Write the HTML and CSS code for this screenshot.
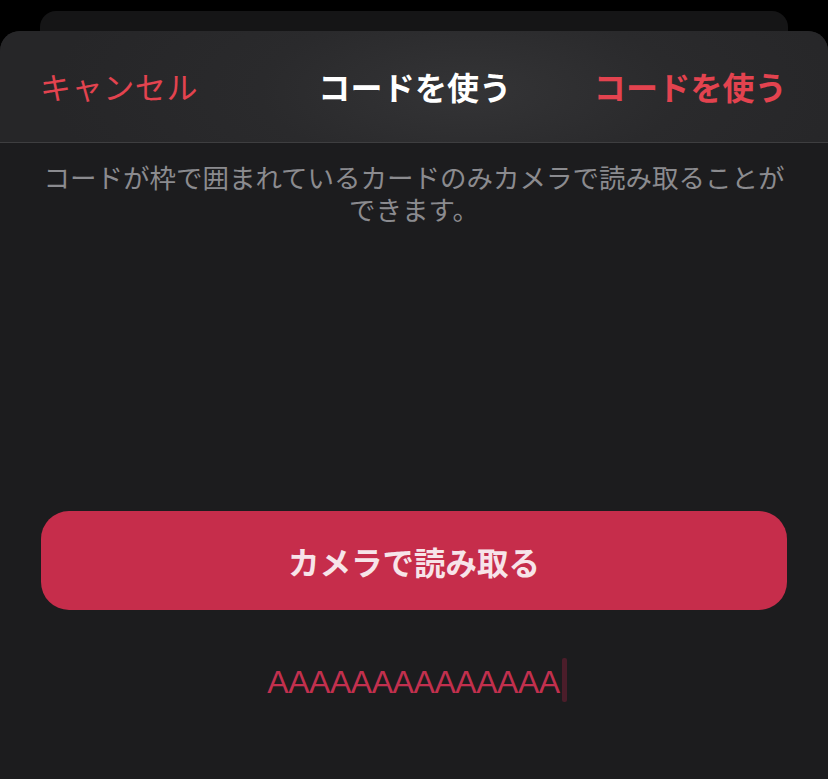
FILE: index.html
```html
<!DOCTYPE html>
<html lang="ja">
<head>
<meta charset="utf-8">
<title>コードを使う</title>
<link rel="stylesheet" href="styles.css">
</head>
<body>
<div class="back-card"></div>
<div class="sheet">
  <header class="sheet-header">
    <span class="hdr-btn cancel">キャンセル</span>
    <span class="hdr-title">コードを使う</span>
    <span class="hdr-btn confirm">コードを使う</span>
  </header>
  <p class="desc">コードが枠で囲まれているカードのみカメラで読み取ることができます。</p>
  <div class="cam-btn">カメラで読み取る</div>
  <div class="code-field">
    <span class="code-text">AAAAAAAAAAAAAA</span><span class="caret"></span>
  </div>
</div>
</body>
</html>
```

FILE: styles.css
```css
html, body {
  margin: 0;
  padding: 0;
  background: #000;
  height: 100%;
  overflow: hidden;
}
body {
  font-family: "Noto Sans CJK JP", "Noto Sans", sans-serif;
  display: flex;
  flex-direction: column;
}
.back-card {
  margin: 11px 40px 0;
  height: 20px;
  background: #151516;
  border-radius: 16px 16px 0 0;
  flex: none;
}
.sheet {
  flex: 1;
  background: #1c1c1e;
  border-radius: 20px 20px 0 0;
  overflow: hidden;
  display: flex;
  flex-direction: column;
}
.sheet-header {
  height: 112px;
  flex: none;
  box-sizing: border-box;
  border-bottom: 1px solid #3e3e40;
  background: radial-gradient(ellipse 420px 160px at 470px 60px, #343436 0%, #2a2a2c 50%, #262628 100%);
  display: flex;
  align-items: center;
  justify-content: space-between;
  padding: 0 41px 2px 40px;
  line-height: 1;
}
.hdr-btn { color: #e3434f; }
.cancel {
  font-weight: 400;
  font-size: 31px;
  letter-spacing: 0.6px;
}
.confirm {
  font-weight: 700;
  font-size: 32px;
  letter-spacing: 0.2px;
}
.hdr-title {
  color: #ffffff;
  font-weight: 700;
  font-size: 32px;
  letter-spacing: 0.2px;
  margin-left: 38px;
}
.desc {
  margin: 18px 0 0;
  padding: 0 40px;
  font-size: 26.5px;
  line-height: 32px;
  color: #8b8b8f;
  text-align: center;
}
.cam-btn {
  margin: 286px 41px 0;
  height: 99px;
  border-radius: 28px;
  background: #c62d4b;
  color: #f7e4e9;
  font-size: 31.5px;
  font-weight: 700;
  display: flex;
  align-items: center;
  justify-content: center;
  flex: none;
}
.code-field {
  margin-top: 48px;
  display: flex;
  justify-content: center;
  align-items: center;
  height: 44px;
  padding-left: 6px;
}
.code-text {
  font-family: "Liberation Sans", Arial, sans-serif;
  font-size: 32px;
  letter-spacing: -0.45px;
  color: #c2304e;
  line-height: 44px;
  position: relative;
  top: 2px;
}
.caret {
  width: 5px;
  height: 44px;
  margin-left: 2px;
  background: #4b1d2a;
  border-radius: 2px;
}
```
